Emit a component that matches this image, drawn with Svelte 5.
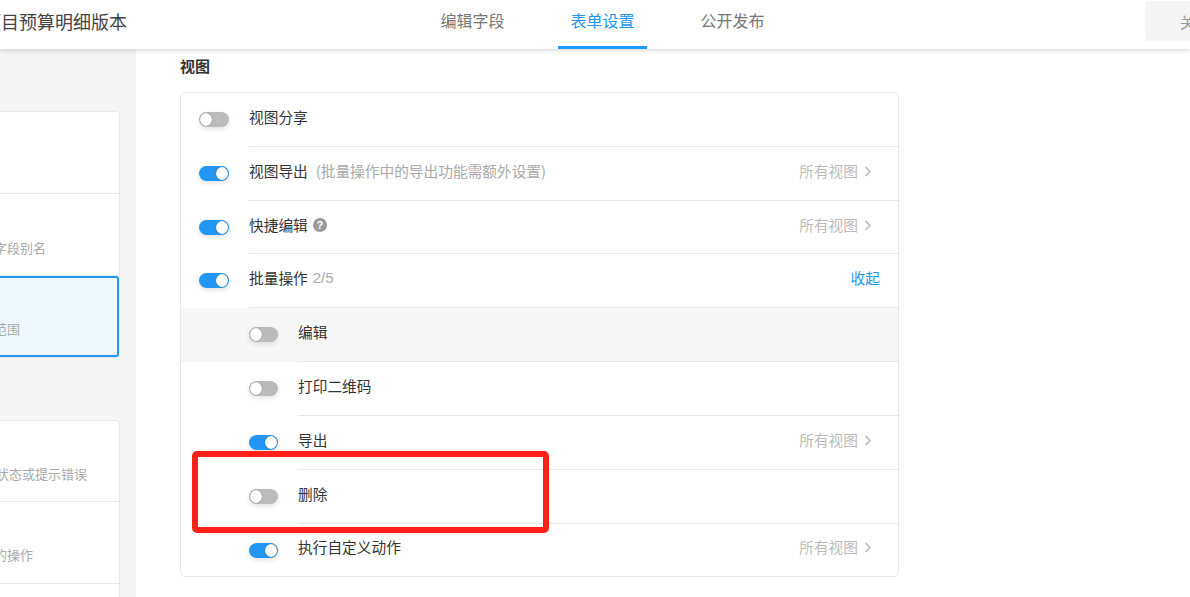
<script lang="ts">
  interface Row {
    label: string;
    on: boolean;
    nested?: boolean;
    hint?: string;
    count?: string;
    help?: boolean;
    scope?: boolean;
    collapse?: boolean;
    hover?: boolean;
  }

  const rows: Row[] = [
    { label: "视图分享", on: false },
    { label: "视图导出", on: true, hint: "(批量操作中的导出功能需额外设置)", scope: true },
    { label: "快捷编辑", on: true, help: true, scope: true },
    { label: "批量操作", on: true, count: "2/5", collapse: true },
    { label: "编辑", on: false, nested: true, hover: true },
    { label: "打印二维码", on: false, nested: true },
    { label: "导出", on: true, nested: true, scope: true },
    { label: "删除", on: false, nested: true },
    { label: "执行自定义动作", on: true, nested: true, scope: true },
  ];

  const tabs = ["编辑字段", "表单设置", "公开发布"];
  let activeTab = $state(1);
</script>

<div class="page">
  <header class="topbar">
    <div class="title">项目预算明细版本</div>
    <nav class="tabs">
      {#each tabs as tab, i}
        <button class="tab" class:active={activeTab === i} onclick={() => (activeTab = i)}>{tab}</button>
      {/each}
    </nav>
    <button class="close-btn">关闭</button>
  </header>

  <div class="body">
    <aside class="sidebar">
      <div class="side-card first">
        <div class="side-item"></div>
        <div class="side-item"><span class="desc shift7">字段别名</span></div>
        <div class="side-item selected"><span class="desc shift7">范围</span></div>
      </div>
      <div class="side-card second">
        <div class="side-item"><span class="desc shift5">状态或提示错误</span></div>
        <div class="side-item"><span class="desc shift7">的操作</span></div>
        <div class="side-item"></div>
      </div>
    </aside>

    <main class="main">
      <h3 class="section-title">视图</h3>
      <div class="panel">
        {#each rows as row, i}
          <div class="row" class:nested={row.nested} class:hover={row.hover}>
            <span class="switch" class:on={row.on}><span class="knob"></span></span>
            <div class="row-body" class:last={i === rows.length - 1}>
              <span class="label">{row.label}</span>
              {#if row.hint}<span class="hint">{row.hint}</span>{/if}
              {#if row.count}<span class="count">{row.count}</span>{/if}
              {#if row.help}<span class="help">?</span>{/if}
              {#if row.scope}
                <span class="scope">
                  所有视图
                  <svg width="8" height="11" viewBox="0 0 8 11"><path d="M1.5 1l4.5 4.5-4.5 4.5" fill="none" stroke="#c8c8c8" stroke-width="2" /></svg>
                </span>
              {/if}
              {#if row.collapse}<span class="collapse">收起</span>{/if}
            </div>
          </div>
        {/each}
      </div>
    </main>
  </div>

  <div class="annotation"></div>
</div>

<style>
  :global(body) {
    margin: 0;
    overflow: hidden;
    background: #fff;
  }

  .page {
    position: relative;
    height: 597px;
    overflow: hidden;
    font-family: "Noto Sans CJK SC", "Liberation Sans", sans-serif;
    color: #333;
  }

  .topbar {
    position: relative;
    z-index: 2;
    display: flex;
    height: 49px;
    background: #fff;
    box-shadow: 0 1px 5px rgba(0, 0, 0, 0.18);
    overflow: hidden;
  }

  .title {
    flex: none;
    width: 446px;
    margin-left: -18px;
    padding-left: 1px;
    box-sizing: border-box;
    font-size: 18px;
    line-height: 42px;
    color: #444;
  }

  .tabs {
    display: flex;
    gap: 41px;
  }

  .tab {
    width: 89px;
    height: 49px;
    padding: 0 0 7px;
    border: 0;
    border-bottom: 3px solid transparent;
    background: none;
    font: inherit;
    font-size: 16px;
    color: #777;
  }

  .tab.active {
    color: #2196f3;
    border-bottom-color: #1f9bff;
  }

  .close-btn {
    flex: none;
    width: 90px;
    height: 40px;
    margin: 1px 0 0 368px;
    padding: 0 0 0 35px;
    border: 0;
    border-radius: 4px;
    background: #f5f5f5;
    font: inherit;
    font-size: 15px;
    color: #999;
    text-align: left;
    white-space: nowrap;
  }

  .body {
    display: flex;
    height: 548px;
  }

  .sidebar {
    flex: none;
    width: 136px;
    box-sizing: border-box;
    padding-top: 62px;
    background: #f5f5f5;
    overflow: hidden;
  }

  .side-card {
    width: 141px;
    margin-left: -21px;
    background: #fff;
    border: 1px solid #e8e8e8;
    border-radius: 4px;
    box-sizing: border-box;
  }

  .side-card.first {
    margin-bottom: 62px;
  }

  .side-item {
    display: flex;
    align-items: flex-end;
    height: 82px;
    padding-bottom: 18px;
    padding-left: 21px;
    box-sizing: border-box;
    border-bottom: 1px solid #e8e8e8;
    overflow: hidden;
  }

  .side-item:last-child {
    border-bottom: 0;
  }

  .second .side-item:first-child {
    height: 81px;
  }

  .second .side-item:nth-child(2) {
    padding-bottom: 19px;
  }

  .side-item.selected {
    height: 81px;
    padding-bottom: 17px;
    border: 2px solid #2196f3;
    border-left: 0;
    border-radius: 3px;
    background: #f0f8ff;
  }

  .desc {
    font-size: 13px;
    line-height: 18px;
    color: #aaa;
    white-space: nowrap;
  }

  .shift7 {
    margin-left: -7px;
  }

  .shift5 {
    margin-left: -5px;
  }

  .main {
    flex: 1;
    padding: 7px 0 0 44px;
  }

  .section-title {
    margin: 0 0 16px;
    font-size: 15px;
    font-weight: 700;
    line-height: 20px;
  }

  .panel {
    width: 719px;
    box-sizing: border-box;
    border: 1px solid #e8e8e8;
    border-radius: 5px;
  }

  .row {
    display: flex;
    height: 53.82px;
    padding-left: 18px;
  }

  .row:last-child {
    height: 52.5px;
  }

  .row.nested {
    padding-left: 68px;
  }

  .row.hover {
    background: #f7f7f7;
  }

  .switch {
    flex: none;
    position: relative;
    width: 30px;
    height: 15px;
    margin: 19px 20px 0 0;
    border-radius: 8px;
    background: #bbb;
    box-shadow: 0 2px 5px rgba(0, 0, 0, 0.12);
  }

  .switch.on {
    background: #2196f3;
  }

  .knob {
    position: absolute;
    top: 1px;
    left: 1px;
    width: 12px;
    height: 13px;
    border-radius: 50%;
    background: #fff;
    box-shadow: 0 0 1px rgba(0, 0, 0, 0.6);
  }

  .on .knob {
    left: auto;
    right: 1px;
  }

  .row.nested .switch {
    width: 29px;
  }

  .row-body {
    flex: 1;
    display: flex;
    align-items: center;
    box-sizing: border-box;
    padding: 0 18px 6px 0;
    border-bottom: 1px solid #e8e8e8;
    font-size: 14.7px;
  }

  .row-body.last {
    border-bottom: 0;
  }

  .hint {
    margin-left: 8px;
    color: #aaa;
  }

  .count {
    margin-left: 5px;
    color: #aaa;
    font-size: 15px;
    font-family: "Liberation Sans", sans-serif;
  }

  .help {
    display: inline-flex;
    align-items: center;
    justify-content: center;
    width: 14px;
    height: 14px;
    margin: 2px 0 0 5px;
    border-radius: 50%;
    background: #999;
    color: #fff;
    font-family: "Liberation Sans", sans-serif;
    font-size: 11px;
    font-weight: 700;
  }

  .scope {
    display: flex;
    align-items: center;
    gap: 6px;
    margin-left: auto;
    padding-right: 8px;
    color: #bbb;
  }

  .scope svg {
    margin-top: 2px;
  }

  .collapse {
    margin-left: auto;
    color: #2196f3;
  }

  .annotation {
    position: absolute;
    z-index: 3;
    left: 192px;
    top: 451px;
    width: 357px;
    height: 82px;
    box-sizing: border-box;
    border: 6px solid #ff2116;
    border-radius: 5px;
    pointer-events: none;
  }
</style>
